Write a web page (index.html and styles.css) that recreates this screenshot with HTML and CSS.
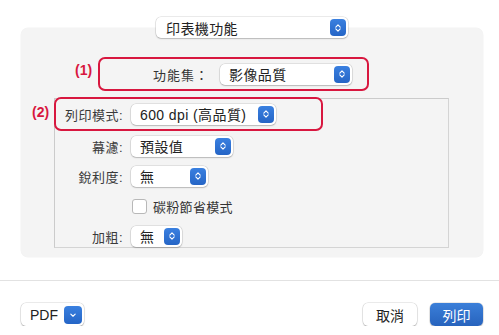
FILE: index.html
```html
<!DOCTYPE html>
<html lang="zh-Hant">
<head>
    <meta charset="UTF-8">
    <title>印表機功能</title>
    <link rel="stylesheet" href="styles.css">
</head>
<body>

<div class="head">
    <div class="popup popup-main">
        <span>印表機功能</span>
        <span class="stepper"><svg viewBox="0 0 16 16" width="10" height="12"><path d="M4.5 6.5 8 3l3.5 3.5M4.5 9.5 8 13l3.5-3.5" fill="none" stroke="#fff" stroke-width="1.8" stroke-linecap="round" stroke-linejoin="round"/></svg></span>
    </div>
</div>

<div class="panel">
    <div class="mark mark-1">
        <span class="tag tag-1">(1)</span>
        <span class="set-label">功能集：</span>
        <div class="popup popup-set">
            <span>影像品質</span>
            <span class="stepper"><svg viewBox="0 0 16 16" width="10" height="12"><path d="M4.5 6.5 8 3l3.5 3.5M4.5 9.5 8 13l3.5-3.5" fill="none" stroke="#fff" stroke-width="1.8" stroke-linecap="round" stroke-linejoin="round"/></svg></span>
        </div>
    </div>

    <div class="box">
        <div class="mark mark-2 row">
            <span class="tag tag-2">(2)</span>
            <label class="lbl">列印模式:</label>
            <div class="popup popup-mode">
                <span>600 dpi (高品質)</span>
                <span class="stepper"><svg viewBox="0 0 16 16" width="10" height="12"><path d="M4.5 6.5 8 3l3.5 3.5M4.5 9.5 8 13l3.5-3.5" fill="none" stroke="#fff" stroke-width="1.8" stroke-linecap="round" stroke-linejoin="round"/></svg></span>
            </div>
        </div>
        <div class="row">
            <label class="lbl">幕濾:</label>
            <div class="popup popup-screen">
                <span>預設值</span>
                <span class="stepper"><svg viewBox="0 0 16 16" width="10" height="12"><path d="M4.5 6.5 8 3l3.5 3.5M4.5 9.5 8 13l3.5-3.5" fill="none" stroke="#fff" stroke-width="1.8" stroke-linecap="round" stroke-linejoin="round"/></svg></span>
            </div>
        </div>
        <div class="row">
            <label class="lbl">銳利度:</label>
            <div class="popup popup-sharp">
                <span>無</span>
                <span class="stepper"><svg viewBox="0 0 16 16" width="10" height="12"><path d="M4.5 6.5 8 3l3.5 3.5M4.5 9.5 8 13l3.5-3.5" fill="none" stroke="#fff" stroke-width="1.8" stroke-linecap="round" stroke-linejoin="round"/></svg></span>
            </div>
        </div>
        <div class="row">
            <span class="lbl"></span>
            <span class="check"></span>
            <span class="check-text">碳粉節省模式</span>
        </div>
        <div class="row">
            <label class="lbl">加粗:</label>
            <div class="popup popup-bold">
                <span>無</span>
                <span class="stepper"><svg viewBox="0 0 16 16" width="10" height="12"><path d="M4.5 6.5 8 3l3.5 3.5M4.5 9.5 8 13l3.5-3.5" fill="none" stroke="#fff" stroke-width="1.8" stroke-linecap="round" stroke-linejoin="round"/></svg></span>
            </div>
        </div>
    </div>
</div>

<div class="footer">
    <div class="btn btn-pdf">
        <span>PDF</span>
        <span class="stepper stepper-down"><svg viewBox="0 0 16 16" width="10" height="10"><path d="M4.5 6.5 8 10l3.5-3.5" fill="none" stroke="#fff" stroke-width="1.8" stroke-linecap="round" stroke-linejoin="round"/></svg></span>
    </div>
    <div class="actions">
        <div class="btn btn-cancel">取消</div>
        <div class="btn btn-print">列印</div>
    </div>
</div>

</body>
</html>
```

FILE: styles.css
```css
body { margin: 0; background: #fff; color: #2b2b2b; font-family: "Liberation Sans", "Noto Sans CJK TC", sans-serif; font-size: 13px; }
.head { padding-top: 17px; padding-left: 156px; }
.popup { display: flex; align-items: center; justify-content: space-between; height: 21px; box-sizing: border-box; padding: 0 2px 0 10px; background: #fff; border-radius: 5px; box-shadow: 0 0 0 0.5px rgba(0, 0, 0, 0.16), 0 1px 1.5px rgba(0, 0, 0, 0.18); white-space: nowrap; font-size: 14px; letter-spacing: 0.4px; color: #222; }
.popup-main { position: relative; z-index: 1; width: 192px; }
.stepper { display: flex; align-items: center; justify-content: center; width: 16px; height: 17px; border-radius: 4px; background: linear-gradient(#3a80e0, #2565c6); }
.panel { margin: -10px 16px 0 21px; padding: 29px 0 9px; background: #f4f4f4; border-radius: 7px; box-shadow: 0 0 0 0.5px rgba(0, 0, 0, 0.05); }
.mark { position: relative; border: 2px solid #d8173f; border-radius: 7px; box-sizing: border-box; }
.mark-1 { display: flex; align-items: center; margin-left: 77px; width: 271px; height: 34px; padding-left: 53px; }
.tag { position: absolute; color: #d8173f; font-weight: bold; font-size: 14px; }
.tag-1 { left: -25px; top: 3px; }
.tag-2 { left: -24px; top: 5px; }
.set-label { width: 67px; letter-spacing: 1px; color: #333; }
.popup-set { width: 132px; padding-left: 9px; }
.box { margin: 7px 0 0 33px; width: 395px; height: 150px; box-sizing: border-box; border: 1px solid #cbcbcb; border-right-color: #d4d4d4; border-bottom-color: #d4d4d4; }
.row { display: flex; align-items: center; height: 30px; }
.mark-2 { width: 269px; height: 34px; margin: -2px 0 0 -1px; }
.lbl { width: 68px; text-align: right; margin-right: 8px; color: #3a3a3a; letter-spacing: 0.5px; }
.mark-2 .lbl { width: 67px; }
.popup-mode { width: 145px; padding-left: 9px; }
.popup-screen { width: 102px; padding-left: 9px; }
.popup-sharp { width: 77px; padding-left: 9px; }
.popup-bold { width: 51px; padding-left: 9px; }
.check { width: 13px; height: 13px; margin-left: 1px; border: 1px solid #b8b8b8; border-radius: 3px; background: #fff; }
.check-text { margin-left: 6px; letter-spacing: 0.3px; color: #333; }
.footer { margin-top: 23px; border-top: 1px solid #e2e2e2; display: flex; justify-content: space-between; padding: 22px 16px 0 21px; }
.actions { display: flex; gap: 13px; }
.btn { display: flex; align-items: center; justify-content: center; height: 23px; box-sizing: border-box; border-radius: 5px; background: #fff; font-size: 14px; color: #222; box-shadow: 0 0 0 0.5px rgba(0, 0, 0, 0.16), 0 1px 1.5px rgba(0, 0, 0, 0.2); }
.btn-pdf { width: 63px; justify-content: space-between; padding: 0 2px 0 9px; }
.stepper-down { width: 18px; height: 18px; }
.btn-cancel { width: 54px; }
.btn-print { width: 53px; color: #fff; background: linear-gradient(#3b7fd9, #2763bd); }
```
